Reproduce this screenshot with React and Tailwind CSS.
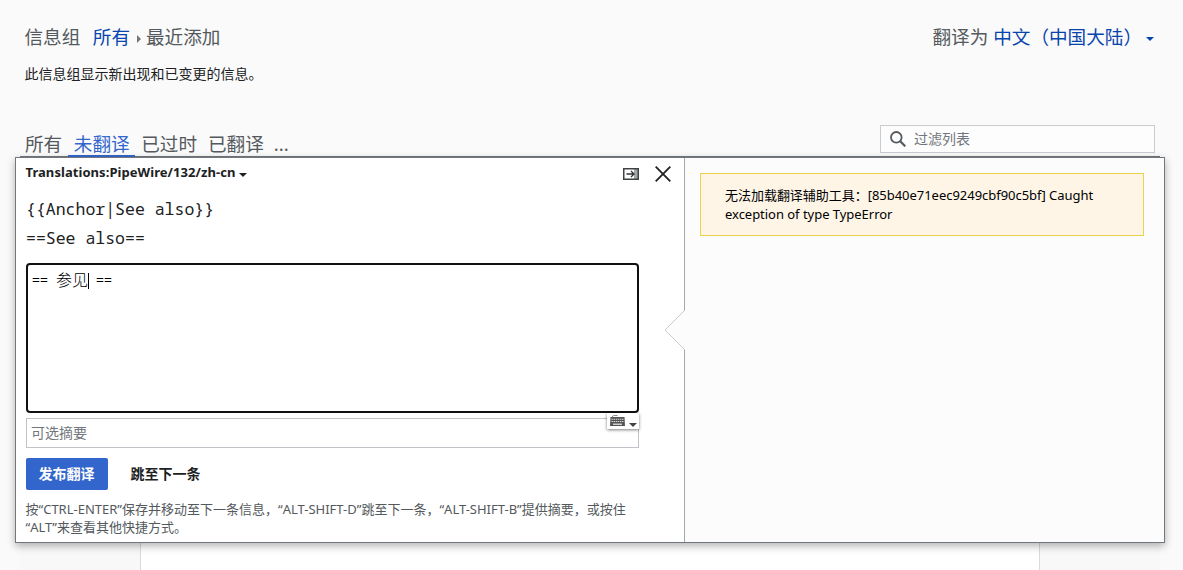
const Caret = ({ className }) => (
  <svg viewBox="0 0 8 4" className={className} fill="currentColor">
    <path d="M0 0h8L4 4z" />
  </svg>
);

const SearchIcon = () => (
  <svg viewBox="0 0 16 16" className="w-4 h-4 shrink-0 text-[#54595d]" fill="none" stroke="currentColor">
    <circle cx="6.3" cy="6.3" r="5.3" strokeWidth="1.8" />
    <path d="M10 10l5.3 5.3" strokeWidth="2.2" />
  </svg>
);

const ExpandIcon = () => (
  <svg viewBox="0 0 16 12" className="w-4 h-3">
    <path d="M11 1h4v10h-4z" fill="#a2a9a9" />
    <path d="M.75.75h14.5v10.5H.75z" fill="none" stroke="#404244" strokeWidth="1.5" />
    <path d="M3.5 6h7.3M8 3l3 3-3 3" fill="none" stroke="#303234" strokeWidth="1.3" />
  </svg>
);

const CloseIcon = () => (
  <svg viewBox="0 0 16 16" className="w-4 h-4" fill="none" stroke="#202122" strokeWidth="1.8">
    <path d="M.7.7l14.6 14.6M15.3.7L.7 15.3" />
  </svg>
);

const KeyboardIcon = () => (
  <svg viewBox="0 0 15 11" className="w-[15px] h-[11px]">
    <path d="M2.5 2C2.5 0 4 .5 5 .5h2.5" fill="none" stroke="#888" />
    <path d="M.5 2h14l.5 9H0z" fill="#555" />
    <path d="M1.5 4.2h12M1.5 6.5h12" stroke="#ddd" strokeWidth="1.1" strokeDasharray="1.4 .7" />
    <path d="M3 9.2h9" stroke="#eee" strokeWidth="1.2" />
  </svg>
);

const GroupHeader = () => (
  <header className="pl-[24.5px] pr-[29px] pt-[23px] text-[#54595d]">
    <div className="flex justify-between h-7 leading-7 text-[18.6px]">
      <div className="flex items-center">
        <span>信息组</span>
        <a className="ml-[12.5px] text-[#0645ad]">所有</a>
        <svg viewBox="0 0 4 8" className="w-1 h-2 ml-[7px] mr-[5px] mt-1" fill="#72777d">
          <path d="M0 0l4 4-4 4z" />
        </svg>
        <span>最近添加</span>
      </div>
      <div className="flex items-center">
        <span>翻译为</span>
        <a className="ml-[5px] flex items-center text-[#0645ad]">
          中文（中国大陆）
          <Caret className="w-2 h-1 ml-[4px] mt-1" />
        </a>
      </div>
    </div>
    <p className="mt-[13px] h-5 leading-5 text-sm text-[#202122]">此信息组显示新出现和已变更的信息。</p>
  </header>
);

const Tabs = () => (
  <div className="flex justify-between mt-[41px] ml-5 mr-[23px] h-8 border-b border-[#72777d]">
    <nav className="flex h-8 pl-[5px] leading-[38px] text-[18.6px] text-[#54595d]">
      <span>所有</span>
      <span className="w-[67px] ml-[6px] text-center border-b-2 border-[#36c] text-[#36c]">未翻译</span>
      <span className="ml-[6px]">已过时</span>
      <span className="ml-[11px]">已翻译</span>
      <span className="ml-[10px]">...</span>
    </nav>
    <div className="flex items-center w-[275px] h-7 mr-[5px] px-[9px] gap-2 bg-white/60 border border-[#c8ccd1] text-sm text-[#72777d]">
      <SearchIcon />
      <span>过滤列表</span>
    </div>
  </div>
);

const Editor = () => (
  <section className="w-[668px] h-full pl-2.5 pr-[13px] bg-white">
    <div className="flex justify-between items-center h-[34px]">
      <h2 className="flex items-center -mt-1 -ml-[0.5px] text-[13px] tracking-[0.06px] font-bold text-[#202122] whitespace-nowrap">
        Translations:PipeWire/132/zh-cn
        <Caret className="w-2 h-1 ml-[4px] mt-1" />
      </h2>
      <div className="flex items-center gap-4 -mt-0.5">
        <ExpandIcon />
        <CloseIcon />
      </div>
    </div>
    <pre className="mt-0.5 mb-[11px] text-[16.5px] leading-[29px] text-[#202122] font-['Noto_Sans_Mono','DejaVu_Sans_Mono',monospace]">
      {"{{Anchor|See also}}\n==See also=="}
    </pre>
    <div className="relative w-[613px] h-[150px] px-1 pt-[7px] border-2 border-[#101112] rounded bg-white text-black">
      <div className="flex items-center h-5 font-['Liberation_Mono','Noto_Sans_CJK_SC',monospace]">
        <span className="w-6 -mt-0.5 text-[13.33px]">==</span>
        <span className="text-base leading-5 font-light">参见</span>
        <span className="w-px h-4 -mt-0.5 bg-black" />
        <span className="ml-[7px] -mt-0.5 text-[13.33px]">==</span>
      </div>
      <div className="absolute -right-[2px] -bottom-[18px] z-10 flex w-8 h-4 pl-[3px] pt-0.5 bg-white shadow-[0_1px_3px_rgba(0,0,0,0.5)]">
        <KeyboardIcon />
        <Caret className="w-2 h-1 ml-1 mt-2 text-[#444]" />
      </div>
    </div>
    <div className="w-[613px] h-[30px] mt-[5px] pl-1 border border-[#c0c3c7] text-sm leading-7 text-[#72777d]">
      可选摘要
    </div>
    <div className="flex mt-2.5 h-8 text-sm leading-8 font-bold">
      <button className="w-[82px] pr-px rounded-xs bg-[#36c] text-white">发布翻译</button>
      <button className="ml-[22.5px] text-[#202122]">跳至下一条</button>
    </div>
    <p className="mt-2.5 -ml-[0.5px] text-[13px] leading-[18px] text-[#54595d] whitespace-nowrap">
      按“CTRL-ENTER”保存并移动至下一条信息，“ALT-SHIFT-D”跳至下一条，“ALT-SHIFT-B”提供摘要，或按住
      <br />
      “ALT”来查看其他快捷方式。
    </p>
  </section>
);

const Helpers = () => (
  <aside className="relative flex-1 h-full pl-[15px] pr-5 pt-[15px] border-l border-[#a2a9b1] bg-[#fcfcfc]">
    <svg viewBox="0 0 21 40" className="absolute -left-[21px] top-[152px] w-[21px] h-10">
      <path d="M21 0L1 20l20 20z" fill="#fcfcfc" />
      <path d="M20.5.5L1 20l19.5 19.5" fill="none" stroke="#c8ccd1" />
    </svg>
    <div className="h-[63px] px-6 pt-3 border border-[#ead24a] bg-[#fef5e7] text-[13px] tracking-[-0.03px] leading-[19px] text-black">
      无法加载翻译辅助工具：[85b40e71eec9249cbf90c5bf] Caught exception of type TypeError
    </div>
  </aside>
);

const App = () => (
  <div className="flex flex-col h-[570px] overflow-hidden bg-[#fafafa] font-['Noto_Sans','Noto_Sans_CJK_SC',sans-serif]">
    <GroupHeader />
    <Tabs />
    <main className="relative flex shrink-0 w-[1150px] h-[386px] ml-[15px] border border-[#72777d] bg-white shadow-[0_3px_8px_rgba(0,0,0,0.3)]">
      <Editor />
      <Helpers />
    </main>
    <div className="flex-1 ml-5 mr-[23px] px-[120px] bg-[#f8f8f8]">
      <div className="h-full border-x border-[#d8dadd] bg-white" />
    </div>
  </div>
);

export default App;
